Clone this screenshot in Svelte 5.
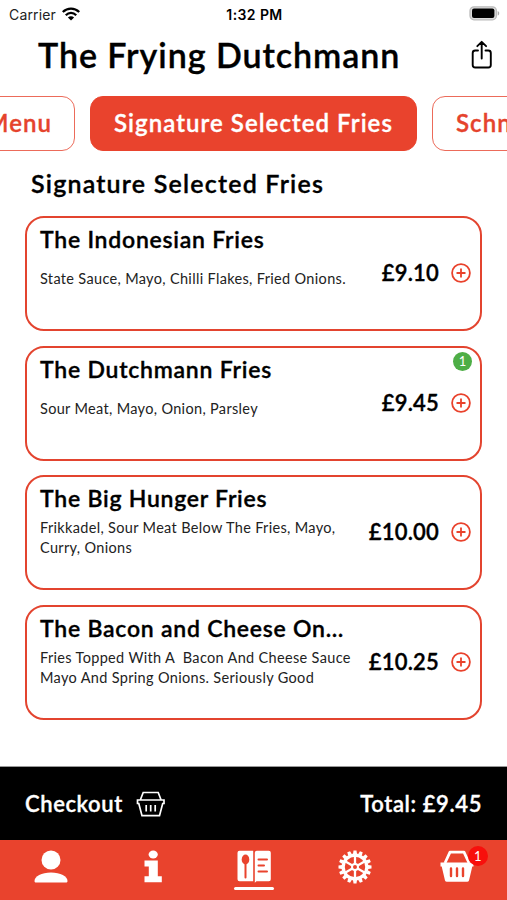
<script lang="ts">
  interface Item { name: string; description: string; price: string; count?: number; }

  const items: Item[] = [
    { name: 'The Indonesian Fries', description: 'State Sauce, Mayo, Chilli Flakes, Fried Onions.', price: '£9.10' },
    { name: 'The Dutchmann Fries', description: 'Sour Meat, Mayo, Onion, Parsley', price: '£9.45', count: 1 },
    { name: 'The Big Hunger Fries', description: 'Frikkadel, Sour Meat Below The Fries, Mayo,\nCurry, Onions', price: '£10.00' },
    { name: 'The Bacon and Cheese On…', description: 'Fries Topped With A  Bacon And Cheese Sauce\nMayo And Spring Onions. Seriously Good', price: '£10.25' },
  ];
  const teeth = Array.from({ length: 16 }, (_, i) => i * 22.5);
  const spokes = [0, 60, 120, 180, 240, 300];
</script>

<div class="screen">
  <div class="status">
    <div class="carrier">
      <span>Carrier</span>
      <svg width="18" height="14" viewBox="0 0 18 14" fill="none" stroke="#000" stroke-width="2.3">
        <path d="M.8 5C5.5.4 12.500.4 17.200 5M3.800 8.200c3-3 7.400-3 10.400 0" />
        <path d="M9 13.500 5.900 10.400c1.800-1.700 4.400-1.700 6.200 0z" fill="#000" stroke="none" />
      </svg>
    </div>
    <span class="time">1:32 PM</span>
    <svg class="battery" width="31" height="15" viewBox="0 0 31 15">
      <rect x="1" y=".8" width="26.400" height="13" rx="4" fill="#ddd" stroke="#bbb" stroke-width="1.300" />
      <rect x="3" y="2.600" width="22.400" height="9.400" rx="2" />
      <path d="M28.700 5c2 .8 2 3.800 0 4.600z" fill="#aaa" />
    </svg>
  </div>

  <header>
    <h1>The Frying Dutchmann</h1>
    <svg class="share" width="22" height="30" viewBox="0 0 22 30" fill="none" stroke="#000" stroke-width="1.900" stroke-linecap="round" stroke-linejoin="round">
      <path d="M7 10.500H4.200a2.500 2.500 0 0 0-2.500 2.500v12a2.500 2.500 0 0 0 2.500 2.500h13.100a2.500 2.500 0 0 0 2.500-2.500V13a2.500 2.500 0 0 0-2.500-2.500H14.500M10.700 18.500V2M6.300 6.200l4.400-4.400 4.400 4.400" />
    </svg>
  </header>

  <nav class="categories">
    <button class="category first">Menu</button>
    <button class="category active">Signature Selected Fries</button>
    <button class="category last">Schnitzel</button>
  </nav>

  <main>
    <h2>Signature Selected Fries</h2>
    {#each items as item}
      <article class="card">
        <div class="details">
          <h3>{item.name}</h3>
          <p class:single={!item.description.includes('\n')}>{item.description}</p>
        </div>
        <span class="price">{item.price}</span>
        <svg class="add" width="20" height="20" viewBox="0 0 20 20" fill="none" stroke="#e9422c" stroke-width="1.800">
          <circle cx="10" cy="10" r="8.900" />
          <path d="M5.500 10h9M10 5.500v9" />
        </svg>
        {#if item.count}
          <span class="count">{item.count}</span>
        {/if}
      </article>
    {/each}
    <h2 class="next">Schnitzel</h2>
  </main>

  <div class="checkout">
    <span class="checkout-label">Checkout</span>
    <svg width="30" height="26" viewBox="0 0 30 26" fill="none" stroke="#fff" stroke-width="1.700">
      <path d="M4.300 9 7.200 1.500h15L25.100 9M1.500 9h26.500v3.500h-1.300l-3.200 12.200H6L2.800 12.500H1.500z" />
      <path d="M10.200 14v6.500M14.700 14v6.500M19.200 14v6.500" />
    </svg>
    <span class="total">Total: £9.45</span>
  </div>

  <nav class="tabs">
    <div class="tab">
      <svg width="34" height="34" viewBox="0 0 34 34" fill="#fff">
        <circle cx="17" cy="10" r="9.500" />
        <path d="M.5 31c0-4.500 7-8.500 16.500-8.500S33.500 26.500 33.500 31c0 1-.7 1.600-1.600 1.600H2.100C1.200 32.600.5 32 .5 31z" />
      </svg>
    </div>
    <div class="tab">
      <svg width="18" height="34" viewBox="0 0 18 34" fill="#fff">
        <ellipse cx="9.200" cy="4.500" rx="4.600" ry="4" />
        <path d="M.5 10.500h13.300v15.800h4v6H.5v-6h4.300v-9.800H.5z" />
      </svg>
    </div>
    <div class="tab selected">
      <svg width="36" height="34" viewBox="0 0 36 34">
        <path fill="#fff" d="M3.500.8h13.700v30.500H3.500a2 2 0 0 1-2-2V2.800a2 2 0 0 1 2-2zM18.800 2.800a2 2 0 0 1 2-2h12a2 2 0 0 1 2 2v26.500a2 2 0 0 1-2 2H20.500l-1.700 1.500z" />
        <ellipse cx="9.500" cy="9.500" rx="3.800" ry="5" fill="#e9432d" />
        <path d="M9.500 13v14.500M22.500 9.500H31M22.500 15.500h5.500M22.500 21.500H31" stroke="#e9432d" stroke-width="2" stroke-linecap="round" />
      </svg>
    </div>
    <div class="tab">
      <svg width="34" height="34" viewBox="-17 -17 34 34" fill="none" stroke="#fff">
        <circle r="11.800" stroke-width="3.200" />
        {#each teeth as angle}
          <path d="M-2-13-1.500-16.500h3L2-13z" fill="#fff" stroke="none" transform="rotate({angle})" />
        {/each}
        {#each spokes as angle}
          <path d="M0-3V-12" stroke-width="2.300" transform="rotate({angle})" />
        {/each}
        <circle r="3" stroke-width="2" />
      </svg>
    </div>
    <div class="tab">
      <div class="basket">
        <svg width="34" height="34" viewBox="0 0 34 34">
          <path d="M5 13 10 2.200h14L29 13" fill="none" stroke="#fff" stroke-width="2.800" stroke-linejoin="round" />
          <path d="M.5 12.500h33v4h-1.200L29 30.500a2 2 0 0 1-2 1.300h-20a2 2 0 0 1-2-1.300L1.700 16.500H.5z" fill="#fff" />
          <path d="M11 18.500v7.500M17 18.500v7.500M23 18.500v7.500" stroke="#e9432d" stroke-width="2.400" stroke-linecap="round" />
        </svg>
        <span class="basket-count">1</span>
      </div>
    </div>
  </nav>
</div>

<style>
  :global(body) { margin: 0; background: #fff; }
  .screen {
    width: 507px;
    height: 900px;
    display: flex;
    flex-direction: column;
    overflow: hidden;
    color: #000;
    font-family: Lato, sans-serif;
    white-space: nowrap;
  }
  svg { display: block; flex: none; }
  h1, h2, h3, p { margin: 0; font-weight: 600; }
  h1, h2, h3, .price, .category, .checkout { -webkit-text-stroke: 0.35px currentColor; }
  .status {
    height: 28px;
    padding: 0 7px 0 9px;
    display: grid;
    grid-template-columns: 1fr auto 1fr;
    align-items: center;
    box-sizing: border-box;
    flex: none;
    font: 14px Inter, sans-serif;
  }
  .carrier { display: flex; align-items: center; gap: 6px; color: #222; letter-spacing: 0.15px; }
  .time { font-weight: 600; font-size: 14px; letter-spacing: 0.4px; }
  .battery { justify-self: end; margin-top: -2px; }
  header {
    height: 68px;
    padding: 0 14px 0 38px;
    display: flex;
    justify-content: space-between;
    box-sizing: border-box;
    flex: none;
  }
  h1 { font-size: 34px; line-height: 54px; letter-spacing: 0.95px; }
  .share { margin-top: 12px; }
  .categories { display: flex; gap: 15px; flex: none; width: 640px; margin-left: -45px; }
  .category {
    height: 55px;
    padding: 0 0 2px;
    box-sizing: border-box;
    border: 1.5px solid #ec6b5a;
    border-radius: 13px;
    background: #fff;
    color: #e5432d;
    font: 600 24px Lato, sans-serif;
    letter-spacing: 1.05px;
    flex: none;
  }
  .first { width: 120px; padding-right: 22px; text-align: right; }
  .active { width: 327px; background: #e9432d; border-color: #e9432d; color: #fff; }
  .last { width: 160px; padding-left: 23px; text-align: left; }
  main { flex: 1; min-height: 0; padding: 0 25px; overflow: hidden; }
  h2 { font-size: 25px; line-height: 65px; padding-left: 6px; letter-spacing: 1.2px; }
  .next { margin-top: 25px; }
  .card {
    position: relative;
    height: 115px;
    margin-bottom: 14.500px;
    padding: 0 9px 0 13px;
    box-sizing: border-box;
    border: 2px solid #e3442f;
    border-radius: 19px;
    display: flex;
    align-items: center;
  }
  .details { flex: 1; align-self: stretch; min-width: 0; }
  h3 { font-size: 23px; line-height: 43px; letter-spacing: 0.76px; }
  p {
    margin-top: -2px;
    font-size: 14.500px;
    font-weight: 400;
    line-height: 20px;
    letter-spacing: 0.33px;
    white-space: pre;
    color: #222;
  }
  p.single { margin-top: 8px; }
  .price { font-size: 22px; font-weight: 600; letter-spacing: 0.2px; margin: -2px 12px 0 0; }
  .add { margin-top: -1px; }
  .count {
    position: absolute;
    top: 4px;
    right: 8px;
    width: 19px;
    border-radius: 50%;
    background: #4eae46;
    color: #fff;
    font-size: 13px;
    line-height: 19px;
    text-align: center;
  }
  .checkout {
    height: 74px;
    padding: 0 25px;
    box-sizing: border-box;
    border-top: 1px solid #999;
    display: flex;
    align-items: center;
    flex: none;
    background: #000;
    background-clip: padding-box;
    color: #fff;
    font-size: 22px;
    font-weight: 600;
    letter-spacing: 0.6px;
  }
  .checkout svg { margin-left: 13px; }
  .total { margin-left: auto; }
  .tabs {
    height: 60px;
    display: grid;
    grid-template-columns: repeat(5, 1fr);
    flex: none;
    background: #e9432d;
  }
  .tab { display: flex; flex-direction: column; align-items: center; padding: 10px 0 0 1px; }
  .selected::after {
    content: '';
    width: 40px;
    height: 3px;
    margin-top: 3px;
    border-radius: 2px;
    background: #fff;
  }
  .basket { position: relative; }
  .basket-count {
    position: absolute;
    left: 28px;
    top: -4px;
    width: 20px;
    border-radius: 50%;
    background: #f80f0c;
    color: #fff;
    font-size: 13px;
    line-height: 20px;
    text-align: center;
  }
</style>
